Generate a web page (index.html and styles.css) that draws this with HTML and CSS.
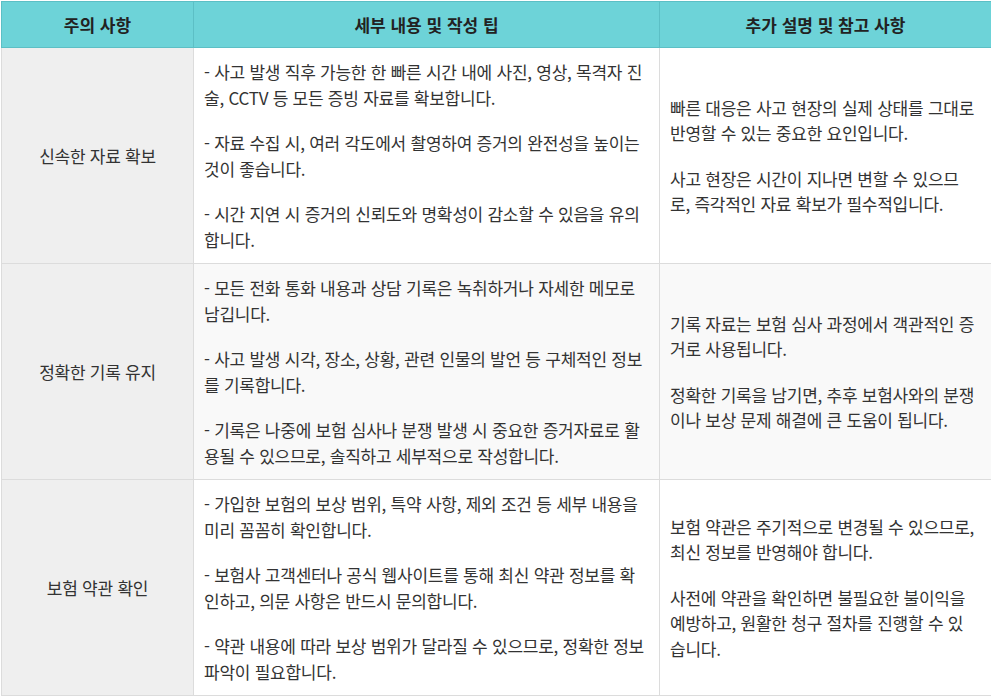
FILE: index.html
```html
<!DOCTYPE html>
<html lang="ko">
<head>
<meta charset="utf-8">
<link rel="stylesheet" href="styles.css">
</head>
<body>
<table class="tips">
  <colgroup>
    <col class="c1"><col class="c2"><col class="c3">
  </colgroup>
  <thead>
    <tr><th>주의 사항</th><th>세부 내용 및 작성 팁</th><th>추가 설명 및 참고 사항</th></tr>
  </thead>
  <tbody>
    <tr>
      <td class="label">신속한 자료 확보</td>
      <td><p>- 사고 발생 직후 가능한 한 빠른 시간 내에 사진, 영상, 목격자 진술, CCTV 등 모든 증빙 자료를 확보합니다.</p><p>- 자료 수집 시, 여러 각도에서 촬영하여 증거의 완전성을 높이는 것이 좋습니다.</p><p>- 시간 지연 시 증거의 신뢰도와 명확성이 감소할 수 있음을 유의합니다.</p></td>
      <td class="note"><p>빠른 대응은 사고 현장의 실제 상태를 그대로 반영할 수 있는 중요한 요인입니다.</p><p>사고 현장은 시간이 지나면 변할 수 있으므로, 즉각적인 자료 확보가 필수적입니다.</p></td>
    </tr>
    <tr class="alt">
      <td class="label">정확한 기록 유지</td>
      <td><p>- 모든 전화 통화 내용과 상담 기록은 녹취하거나 자세한 메모로 남깁니다.</p><p>- 사고 발생 시각, 장소, 상황, 관련 인물의 발언 등 구체적인 정보를 기록합니다.</p><p>- 기록은 나중에 보험 심사나 분쟁 발생 시 중요한 증거자료로 활용될 수 있으므로, 솔직하고 세부적으로 작성합니다.</p></td>
      <td class="note"><p>기록 자료는 보험 심사 과정에서 객관적인 증거로 사용됩니다.</p><p>정확한 기록을 남기면, 추후 보험사와의 분쟁이나 보상 문제 해결에 큰 도움이 됩니다.</p></td>
    </tr>
    <tr>
      <td class="label">보험 약관 확인</td>
      <td><p>- 가입한 보험의 보상 범위, 특약 사항, 제외 조건 등 세부 내용을 미리 꼼꼼히 확인합니다.</p><p>- 보험사 고객센터나 공식 웹사이트를 통해 최신 약관 정보를 확인하고, 의문 사항은 반드시 문의합니다.</p><p>- 약관 내용에 따라 보상 범위가 달라질 수 있으므로, 정확한 정보 파악이 필요합니다.</p></td>
      <td class="note"><p>보험 약관은 주기적으로 변경될 수 있으므로, 최신 정보를 반영해야 합니다.</p><p>사전에 약관을 확인하면 불필요한 불이익을 예방하고, 원활한 청구 절차를 진행할 수 있습니다.</p></td>
    </tr>
  </tbody>
</table>
</body>
</html>
```
FILE: styles.css
```css
html, body {
  margin: 0;
  padding: 0;
  background: #fff;
}
body {
  padding: 1px 0 0 1px;
  font-family: "Noto Sans CJK KR", "Noto Sans", sans-serif;
  font-size: 17px;
  color: #333;
}
.tips {
  width: 990px;
  border-collapse: collapse;
  table-layout: fixed;
}
.c1 { width: 192px; }
.c2 { width: 466px; }
.c3 { width: 332px; }
.tips th {
  background: #6dd3d8;
  border: 1px solid #5cbfc5;
  height: 45px;
  padding: 0 10px;
  font-weight: 700;
  color: #222;
  text-align: center;
  vertical-align: middle;
}
.tips td {
  border: 1px solid #dcdcdc;
  padding: 11px 10px 11px 10px;
  vertical-align: middle;
  line-height: 25.5px;
  letter-spacing: -0.25px;
}
.tips td.note {
  padding-right: 15px;
}
.tips td.label {
  background: #efefef;
  text-align: center;
}
.tips tr.alt td { background: #f9f9f9; }
.tips tr.alt td.label { background: #efefef; }
.tips p {
  margin: 0 0 20px 0;
}
.tips p:last-child { margin-bottom: 0; }
```
